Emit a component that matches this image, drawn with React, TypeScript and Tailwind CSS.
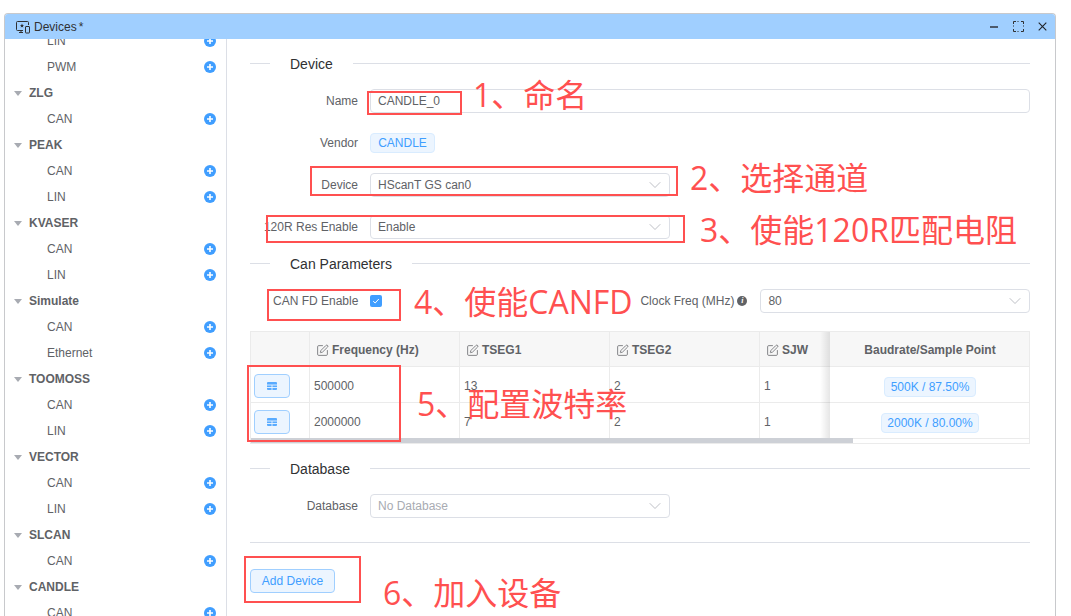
import { ChevronDown, SquarePen } from "lucide-react";

const tree = [
  { name: "LIN", sub: true },
  { name: "PWM", sub: true },
  { name: "ZLG" },
  { name: "CAN", sub: true },
  { name: "PEAK" },
  { name: "CAN", sub: true },
  { name: "LIN", sub: true },
  { name: "KVASER" },
  { name: "CAN", sub: true },
  { name: "LIN", sub: true },
  { name: "Simulate" },
  { name: "CAN", sub: true },
  { name: "Ethernet", sub: true },
  { name: "TOOMOSS" },
  { name: "CAN", sub: true },
  { name: "LIN", sub: true },
  { name: "VECTOR" },
  { name: "CAN", sub: true },
  { name: "LIN", sub: true },
  { name: "SLCAN" },
  { name: "CAN", sub: true },
  { name: "CANDLE" },
  { name: "CAN", sub: true },
];

const notes = [
  { text: "1、命名", box: "left-[367px] top-[91px] w-[95px] h-[24px]", label: "left-[473px] top-[72px]" },
  { text: "2、选择通道", box: "left-[310px] top-[166px] w-[368px] h-[30px]", label: "left-[690px] top-[155px]" },
  { text: "3、使能120R匹配电阻", box: "left-[266px] top-[215px] w-[419px] h-[28px]", label: "left-[700px] top-[207px]" },
  { text: "4、使能CANFD", box: "left-[267px] top-[289px] w-[134px] h-[32px]", label: "left-[414px] top-[279px]" },
  { text: "5、配置波特率", box: "left-[247px] top-[365px] w-[154px] h-[77px]", label: "left-[417px] top-[381px]" },
  { text: "6、加入设备", box: "left-[244px] top-[556px] w-[117px] h-[47px]", label: "left-[383px] top-[570px]" },
];

function Divider({ title }: { title: string }) {
  return (
    <div className="flex items-center h-px bg-[#dcdfe6] relative">
      <span className="ml-5 bg-white px-5 text-sm text-[#303133]">{title}</span>
    </div>
  );
}

function Select({ value, width, muted }: { value: string; width: string; muted?: boolean }) {
  return (
    <div className={`${width} h-6 flex items-center justify-between pl-[7px] pr-1 rounded-[4px] border border-[#dcdfe6] ${muted ? "text-[#a8abb2]" : ""}`}>
      <span>{value}</span>
      <ChevronDown size={20} strokeWidth={0.9} className="text-[#a8abb2]" />
    </div>
  );
}

function Row({ label, children, cls }: { label: string; children: React.ReactNode; cls: string }) {
  return (
    <div className={`flex items-center h-6 ${cls}`}>
      <div className="w-[108px] text-right whitespace-nowrap flex justify-end">{label}</div>
      <div className="ml-3 flex-1 flex">{children}</div>
    </div>
  );
}

function HeadCell({ title, width }: { title: string; width: string }) {
  return (
    <div className={`${width} shrink-0 h-full flex items-center gap-[3px] pl-[6px] pt-[2px] border-r border-[#ebebeb] font-bold`}>
      <SquarePen size={13} strokeWidth={1.4} />
      <span>{title}</span>
    </div>
  );
}

function DataRow({ freq, t1, t2, sjw, baud, tagWidth }: { freq: string; t1: string; t2: string; sjw: string; baud: string; tagWidth: string }) {
  return (
    <div className="flex h-9 border-b border-[#ebebeb]">
      <div className="w-[60px] shrink-0 border-r border-[#ebebeb] flex items-center pl-1 pt-[2px]">
        <button className="w-9 h-6 rounded-[4px] border border-[#a0cfff] bg-[#ecf5ff] flex items-center justify-center">
          <svg width="10" height="8" viewBox="0 0 10 8">
            <rect width="10" height="8" rx="1" fill="#409eff" fillOpacity="0.85" />
            <path d="M0 3h10M0 5.5h10M5 3v5" stroke="#ecf5ff" strokeWidth="0.9" />
          </svg>
        </button>
      </div>
      <div className="w-[150px] shrink-0 border-r border-[#ebebeb] flex items-center pl-1 pt-[2px]">{freq}</div>
      <div className="w-[150px] shrink-0 border-r border-[#ebebeb] flex items-center pl-1 pt-[2px]">{t1}</div>
      <div className="w-[150px] shrink-0 border-r border-[#ebebeb] flex items-center pl-1 pt-[2px]">{t2}</div>
      <div className="w-[70px] shrink-0 flex items-center pl-1 pt-[2px]">{sjw}</div>
      <div className="w-[200px] shrink-0 flex items-center justify-center pt-[2px] bg-white">
        <span className={`${tagWidth} h-5 mt-0.5 flex items-center justify-center rounded-[4px] border border-[#d9ecff] bg-[#ecf5ff] text-[#409eff]`}>{baud}</span>
      </div>
    </div>
  );
}

export default function App() {
  return (
    <div className="relative h-[616px] overflow-hidden bg-white text-xs text-[#606266] font-['Liberation_Sans','Noto_Sans_CJK_SC',sans-serif]">
      <div className="absolute left-[4px] top-[13px] w-[1052px] h-[620px] flex flex-col rounded-t-[4px] border border-[#c8c9cc] border-b-0 overflow-hidden">
        {/* title bar */}
        <div className="h-[25px] shrink-0 bg-[#a0cfff] flex items-center pl-[11px] pr-[8px] z-10">
          <svg width="14" height="14" viewBox="0 0 14 14" fill="none" stroke="#303133" strokeWidth="1">
            <path d="M7 10.5H1.5a1 1 0 0 1-1-1v-7a1 1 0 0 1 1-1h10a1 1 0 0 1 1 1V5" />
            <path d="M3 12.5h4M5 10.5v2" />
            <rect x="9.5" y="6.5" width="4" height="6.5" rx="0.5" />
            <path d="M6 3.5 6.6 5h1.4L6.9 6l.4 1.6L6 6.8l-1.3.8.4-1.6L4 5h1.4z" fill="#303133" stroke="none" />
          </svg>
          <span className="ml-[4px] text-[#303133]">Devices</span>
          <span className="ml-[2px] text-[#303133]">*</span>
          <div className="ml-auto flex items-center">
            <span className="w-2 h-[2px] bg-[#4c5a6c]" />
            <svg className="ml-[15px]" width="11" height="11" viewBox="0 0 11 11" fill="none" stroke="#303133" strokeWidth="1">
              <path d="M.5 3V.5H3M8 .5h2.5V3M10.5 8v2.5H8M3 10.5H.5V8" />
              <path d="M4.5 .5h2M4.5 10.5h2M.5 4.5v2M10.5 4.5v2" strokeDasharray="1 1" />
            </svg>
            <svg className="ml-[14px]" width="9" height="9" viewBox="0 0 9 9" stroke="#1f2329" strokeWidth="1.1">
              <path d="M.7.7l7.6 7.6M8.3.7.7 8.3" />
            </svg>
          </div>
        </div>

        <div className="flex flex-1 min-h-0">
          {/* device tree */}
          <div className="w-[222px] shrink-0 border-r border-[#dcdfe6] -mt-[11px]">
            {tree.map((item, i) =>
              item.sub ? (
                <div key={i} className="h-[26px] flex items-center justify-between pl-[42px] pr-[10px]">
                  <span>{item.name}</span>
                  <span className="w-3 h-3 rounded-full bg-[#409eff] flex items-center justify-center text-white">
                    <svg width="8" height="8" viewBox="0 0 8 8" stroke="currentColor" strokeWidth="1.6">
                      <path d="M4 1v6M1 4h6" />
                    </svg>
                  </span>
                </div>
              ) : (
                <div key={i} className="h-[26px] flex items-center pl-[9px] font-bold">
                  <span className="w-0 h-0 border-x-[4px] border-x-transparent border-t-[5px] border-t-[#a8abb2]" />
                  <span className="ml-[7px]">{item.name}</span>
                </div>
              ),
            )}
          </div>

          {/* form */}
          <div className="flex-1 min-w-0 pl-[23px] pr-[25px] pt-[24px]">
            <Divider title="Device" />
            <Row label="Name" cls="mt-[25px]">
              <div className="w-full h-6 flex items-center pl-[7px] rounded-[4px] border border-[#dcdfe6]">CANDLE_0</div>
            </Row>
            <Row label="Vendor" cls="mt-[18px]">
              <span className="h-5 w-[65px] flex items-center justify-center rounded-[4px] border border-[#d9ecff] bg-[#ecf5ff] text-[#409eff]">CANDLE</span>
            </Row>
            <Row label="Device" cls="mt-[18px]">
              <Select value="HScanT GS can0" width="w-[300px]" />
            </Row>
            <Row label="120R Res Enable" cls="mt-[18px]">
              <Select value="Enable" width="w-[300px]" />
            </Row>

            <div className="mt-[24px]">
              <Divider title="Can Parameters" />
            </div>

            <div className="mt-[25px] h-6 flex items-center">
              <span className="ml-[23px]">CAN FD Enable</span>
              <span className="ml-[12px] w-3 h-3 rounded-[2px] bg-[#409eff] flex items-center justify-center text-white">
                <svg width="8" height="8" viewBox="0 0 8 8" fill="none" stroke="currentColor" strokeWidth="1">
                  <path d="M1.2 4.2 3.2 6 6.8 2" />
                </svg>
              </span>
              <span className="ml-[258px]">Clock Freq (MHz)</span>
              <span className="ml-[3px] w-[10px] h-[10px] rounded-full bg-[#606266] text-white text-[8px] leading-[10px] text-center italic font-bold font-['Liberation_Serif',serif]">i</span>
              <div className="ml-[13px] flex-1">
                <Select value="80" width="w-full" />
              </div>
            </div>

            {/* parameter table */}
            <div className="mt-[18px] w-[780px] h-[113px] border border-[#ebebeb] overflow-hidden relative">
              <div className="flex h-[35px] bg-[#f7f7f7] border-b border-[#ebebeb]">
                <div className="w-[59px] shrink-0 border-r border-[#ebebeb]" />
                <HeadCell title="Frequency (Hz)" width="w-[150px]" />
                <HeadCell title="TSEG1" width="w-[150px]" />
                <HeadCell title="TSEG2" width="w-[150px]" />
                <div className="w-[70px] shrink-0 flex items-center gap-[3px] pl-[6px] pt-[2px] font-bold">
                  <SquarePen size={13} strokeWidth={1.4} />
                  <span>SJW</span>
                </div>
                <div className="w-[200px] shrink-0 flex items-center justify-center pt-[2px] font-bold">
                  Baudrate/Sample Point
                </div>
              </div>
              <div className="-ml-px">
                <DataRow freq="500000" t1="13" t2="2" sjw="1" baud="500K / 87.50%" tagWidth="w-[92px]" />
                <DataRow freq="2000000" t1="7" t2="2" sjw="1" baud="2000K / 80.00%" tagWidth="w-[98px]" />
              </div>
              {/* shadow of the fixed column */}
              <div className="absolute left-[569px] top-0 w-[10px] h-[107px] bg-gradient-to-l from-black/10 to-transparent" />
              <div className="absolute left-0 bottom-0 w-[602px] h-[5px] bg-[#cdd0d6]" />
            </div>

            <div className="mt-[24px]">
              <Divider title="Database" />
            </div>
            <Row label="Database" cls="mt-[25px]">
              <Select value="No Database" width="w-[300px]" muted />
            </Row>
            <div className="mt-[24px] h-px bg-[#dcdfe6]" />
            <button className="mt-[26px] w-[85px] h-6 rounded-[4px] border border-[#a0cfff] bg-[#ecf5ff] text-[#409eff]">Add Device</button>
          </div>
        </div>
      </div>

      {/* red annotations on top of the screenshot */}
      {notes.map((n) => (
        <div key={n.text}>
          <div className={`absolute ${n.box} border-2 border-[#ff5050]`} />
          <span className={`absolute ${n.label} text-[32px] leading-[46px] whitespace-nowrap text-[#ff5050] font-['Open_Sans','Noto_Sans_CJK_SC',sans-serif]`}>{n.text}</span>
        </div>
      ))}
    </div>
  );
}
